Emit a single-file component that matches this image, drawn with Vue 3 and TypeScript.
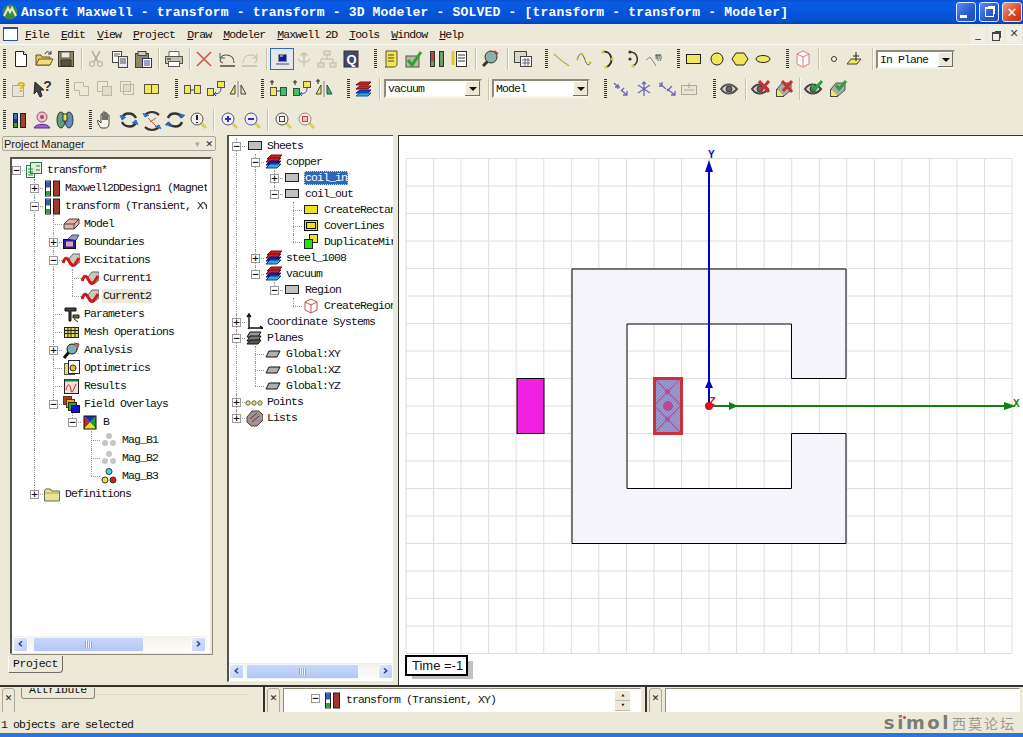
<script setup lang="ts">
type Item = [string, number, string?];

const S = (d: string, fill = 'none', stroke = '#222', sw = 1) =>
  `<path d="${d}" fill="${fill}" stroke="${stroke}" stroke-width="${sw}"/>`;
const R = (x: number, y: number, w: number, h: number, fill: string, stroke = '#222') =>
  `<rect x="${x}" y="${y}" width="${w}" height="${h}" fill="${fill}" stroke="${stroke}"/>`;
const C = (x: number, y: number, r: number, fill: string, stroke = 'none') =>
  `<circle cx="${x}" cy="${y}" r="${r}" fill="${fill}" stroke="${stroke}"/>`;
const T = (x: number, y: number, t: string, fill: string, size = 12, w = 'bold') =>
  `<text x="${x}" y="${y}" fill="${fill}" font-size="${size}" font-weight="${w}" font-family="Liberation Sans, sans-serif" text-anchor="middle">${t}</text>`;

const eye = (c = '#555') =>
  S('M2 11c4-6 11-6 16 0c-5 6-12 6-16 0z', '#d8d4c8', c, 2) + C(10, 11, 3, '#666', '#333');
const zoomGlass = (inner: string, ring = '#555') =>
  S('M14 14l5 5', 'none', '#d8d060', 3) + C(10, 10, 6, '#f2f0e6', ring) + inner;
const layers =
  S('M3 7l4-3h11l-3 3z', '#d02020', '#801010') + S('M3 11l4-3h11l-3 3z', '#c03030', '#601010') +
  S('M3 15l4-3h11l-3 3z', '#2040d0', '#102080') + S('M3 18l4-3h11l-3 3z', '#30a8e0', '#1060a0');
const pairYG = (a: string, b: string) =>
  R(3.5, 7.5, 6, 8, a, '#554') + S('M9 12h4', 'none', '#2040a0') + R(13.5, 7.5, 6, 8, b, '#554');
const arrowSet = (d: string) => S(d, 'none', '#6868b8', 1.3);

const ICONS: Record<string, string> = {
  new: S('M5.5 3.5h8l3 3v12h-11z', '#fff', '#222') + S('M13.5 3.5v3h3', '#fff', '#222'),
  open: S('M3 7h5l1 2h8v8H3z', '#e8c860', '#665520') + S('M3 17l3-6h14l-3 6z', '#f4dc80', '#665520') + S('M12 6c1-3 4-3 6 0m0-3v3h-3', 'none', '#333'),
  save: R(3.5, 3.5, 15, 15, '#8c8a60', '#3c3c28') + R(6, 4, 9, 6, '#ece9d8', '#555') + R(6, 12, 10, 6, '#55553a', '#333'),
  cut: S('M7 3l6 11M15 3l-6 11', 'none', '#aaa69a', 1.4) + C(7, 16, 2.5, 'none', '#aaa69a') + C(15, 16, 2.5, 'none', '#aaa69a'),
  copy: R(3.5, 3.5, 9, 11, '#fff', '#444') + R(9.5, 8.5, 9, 11, '#e8e8f0', '#444') + S('M11 11h6M11 13h6M11 15h6', 'none', '#555') + S('M5 6h6M5 8h4', 'none', '#555'),
  paste: R(3.5, 5.5, 13, 14, '#8c8a60', '#44442c') + R(6, 3.5, 8, 4, '#ccc', '#444') + R(10.5, 10.5, 9, 9, '#fff', '#336') + S('M12 13h6M12 15h6M12 17h6', 'none', '#448'),
  print: S('M6 3.5h10v5H6z', '#fff', '#666') + R(2.5, 8.5, 17, 7, '#c4c0b0', '#555') + R(5.5, 13.5, 11, 5, '#fff', '#555') + S('M4 11h4', 'none', '#222'),
  del: S('M4 4l14 14M18 4L4 18', 'none', '#cc5850', 1.6),
  undo: S('M4 18h15', 'none', '#555', 1.6) + S('M7 15c-5-1-3-8 3-8c5 0 8 3 8 8', 'none', '#555', 1.1) + S('M4 5v5h5', 'none', '#555'),
  redo: S('M3 18h15', 'none', '#c4c0b4', 1.6) + S('M15 15c5-1 3-8-3-8c-5 0-8 3-8 8', 'none', '#c4c0b4', 1.1) + S('M18 5v5h-5', 'none', '#c4c0b4'),
  sel: R(7.5, 6.5, 8, 7, '#1018b0', '#8a8a8a') + S('M5 16h13', 'none', '#999', 2) + S('M9 8h3', 'none', '#fff'),
  ant: S('M11 9v10', 'none', '#bcb8ac') + S('M7 8c2-4 6-4 8 0M5 11c2 4 10 4 12 0', 'none', '#bcb8ac') + C(11, 7, 2, '#c8c4b8'),
  net: R(8, 3, 6, 4, '#e4e0d0', '#bcb8ac') + R(2, 15, 6, 4, '#e4e0d0', '#bcb8ac') + R(14, 15, 6, 4, '#e4e0d0', '#bcb8ac') + S('M11 7v4M5 15v-4h12v4', 'none', '#bcb8ac'),
  q: R(4, 3, 14, 16, '#44486c', '#333') + T(11, 15.5, 'Q', '#fff', 13),
  note: S('M6 3h11v13c0 3-3 3-3 3H5c2 0 1-3 1-3z', '#f2e648', '#554') + S('M8 7h6M8 10h6M8 13h6', 'none', '#443'),
  check: R(3, 8, 13, 11, '#b8b8a8', '#555') + S('M5 12l4 5l9-13', 'none', '#30a030', 3),
  fig: R(4.5, 3.5, 4, 15, '#60a060', '#333') + R(13.5, 3.5, 4, 15, '#60a060', '#333') + R(5.5, 5, 2, 8, '#c04040', '#c04040') + S('M15 5h1v7h-1z', '#e8e050', '#886'),
  list: R(8.5, 3.5, 10, 15, '#fff', '#333') + S('M10 7h7M10 10h7M10 13h7', 'none', '#333') + S('M5 3v14', 'none', '#e0c830', 3),
  glass: S('M4 18l5-5', 'none', '#333', 3) + C(12, 9, 6, '#8ab0a8', '#333') + S('M15 3l4 3', 'none', '#c04040', 2),
  sheet: R(2.5, 3.5, 12, 11, '#dcd8c8', '#444') + R(8.5, 8.5, 11, 10, '#fff', '#444') + S('M10 12h8M10 15h8M13 10v8M16 10v8', 'none', '#666'),
  line: S('M3 6l8 7l7 5', 'none', '#888') + `<path d="M3 6l8 7l7 5" stroke="#d8c820" stroke-width="2" stroke-dasharray="2 6" fill="none"/>`,
  spline: S('M3 12c3-10 6-6 8 0s4 6 6 2', 'none', '#556') + `<path d="M3 12l5-6l5 10l4-2" stroke="#d8c820" stroke-width="2" stroke-dasharray="2 5" fill="none"/>`,
  arc3: `<path d="M6 4c8-2 12 10 4 15" fill="none" stroke="#333" stroke-width="2"/>` + C(6, 4, 1.6, '#d8c820') + C(15, 11, 1.6, '#d8c820') + C(9, 19, 1.6, '#d8c820'),
  arcc: `<path d="M9 4c8 0 10 10 3 14" fill="none" stroke="#333" stroke-width="1.5"/>` + C(9, 4, 1.6, '#333') + C(9, 11, 1.6, '#333') + C(12, 18, 1.6, '#d8c820'),
  ft: S('M2 12l4-3l3 4l3 5', 'none', '#888') + T(14, 11, 'f(t)', '#345', 8, 'normal'),
  rect: R(3.5, 6.5, 14, 9, '#f0e858', '#222'),
  circ: C(11, 11, 6, '#f0e858', '#222'),
  hex: S('M7 5h8l4 6l-4 6H7l-4-6z', '#f0e858', '#222'),
  ell: `<ellipse cx="11" cy="11" rx="7" ry="3.5" fill="#f0e858" stroke="#222"/>`,
  box: S('M11 3l6 3v10l-6 3l-6-3V6z', '#fff', '#e07878') + S('M5 6l6 3l6-3M11 9v10', 'none', '#e07878'),
  pt: C(11, 11, 2.5, '#f6f4e4', '#333'),
  planeT: S('M6 11h10l-4 5H2z', '#f0e858', '#444') + S('M11 4v9M8 8h6', 'none', '#222'),
  helpdoc: R(3.5, 7.5, 11, 11, '#e8e4d8', '#aaa') + T(12, 14, '?', '#d8b810', 15),
  arrowq: S('M4 4l9 8h-4l2 6l-2 1l-3-6l-3 3z', '#444', '#222') + T(16, 13, '?', '#333', 14),
  u1: S('M3.5 4.5h9v4h5v9h-9v-5h-5z', 'none', '#bcb8a8'),
  u2: R(3.5, 3.5, 10, 10, 'none', '#bcb8a8') + R(8.5, 8.5, 9, 9, '#e0dccc', '#bcb8a8'),
  u3: R(3.5, 3.5, 10, 10, 'none', '#bcb8a8') + R(6.5, 6.5, 10, 10, 'none', '#bcb8a8') + R(6.5, 6.5, 7, 7, '#e0dccc', '#bcb8a8'),
  split: R(3.5, 6.5, 7, 9, '#f0e858', '#554') + R(10.5, 6.5, 7, 9, '#f0e858', '#554'),
  mv: pairYG('#f0e858', '#f0e858'),
  rot: R(3.5, 10.5, 6, 7, '#f0e858', '#554') + R(13.5, 3.5, 7, 6, '#f0e858', '#554') + S('M17 10c0 4-2 6-7 6m2-2l-2 2l2 2', 'none', '#2040c0'),
  mir: S('M11 3v16', 'none', '#888') + S('M8 7v9H3z', '#f0e858', '#444') + S('M14 7v9h5z', '#e4e0d0', '#444'),
  mvp: S('M5 2v5M3 4h4', 'none', '#222') + R(3.5, 9.5, 6, 8, '#f0e858', '#554') + S('M9 13h4', 'none', '#2040a0') + R(13.5, 9.5, 6, 8, '#40c060', '#254'),
  rotp: R(3.5, 10.5, 6, 7, '#40c060', '#254') + R(13.5, 3.5, 7, 6, '#f0e858', '#554') + S('M17 10c0 4-2 6-7 6m2-2l-2 2l2 2', 'none', '#2040c0') + S('M5 2v5M3 4h4', 'none', '#222'),
  mirp: S('M11 3v16', 'none', '#888') + S('M8 7v9H3z', '#f0e858', '#444') + S('M14 7v9h5z', '#40b060', '#254') + S('M5 1v5M3 3h4', 'none', '#222'),
  lay: layers,
  a1: arrowSet('M4 5l4 4M8 6v5M5 9h5M11 12l6 5M17 13v4h-4M14 10l-3 3'),
  a2: arrowSet('M11 4v14M5 7l12 8M17 7L5 15M9 6l2-2l2 2') + C(11, 11, 1.5, '#6868b8'),
  a3: arrowSet('M3 5l7 6M6 4v4H3M11 11l8 6M19 13v4h-4M16 8l-5 5'),
  a4: R(3.5, 7.5, 15, 9, '#e8e4d8', '#aaa69a') + S('M6 12h10M11 5v5', 'none', '#aaa69a'),
  eye: eye(),
  eyex: eye('#444') + S('M9 3l10 11M19 3L10 13', 'none', '#c83030', 3),
  boxx: R(3.5, 11.5, 7, 7, '#f0e858', '#444') + S('M4 11l5-6h9v7l-7 6', '#aaa', '#555') + S('M9 3l10 11M19 3L10 13', 'none', '#c83030', 3),
  eyeok: eye('#444') + S('M9 7l3 4l7-8', 'none', '#30a040', 3),
  boxok: R(3.5, 11.5, 7, 7, '#f0e858', '#444') + S('M4 11l5-6h9v7l-7 6', '#aaa', '#555') + S('M9 7l3 4l7-8', 'none', '#30a040', 3),
  tb1: R(5.5, 4.5, 4, 14, '#336', '#222') + R(6, 5, 3, 5, '#4070c0', 'none') + R(6, 14, 3, 4, '#40a040', 'none') + R(12.5, 4.5, 5, 14, '#a04038', '#222'),
  person: C(11, 8, 5, '#e8c8c0', '#a04878') + C(11, 8, 2, '#a04878') + S('M3 19c2-5 14-5 16 0z', '#a060d8', '#603090'),
  bino: `<ellipse cx="7" cy="11" rx="4" ry="8" fill="#60a080" stroke="#333"/><ellipse cx="15" cy="11" rx="4" ry="8" fill="#6090c0" stroke="#333"/>` + R(9, 5, 4, 7, '#f0e050', '#333'),
  hand: S('M6 19c-3-4-4-7-3-8l3 3V5h2v6V3h2v8V4h2v7V6h2v9c0 3-2 4-4 4z', '#f8f6ea', '#444'),
  rot1: `<path d="M4 9c2-6 11-6 14 0" fill="none" stroke="#333" stroke-width="2.4"/><path d="M18 13c-2 6-11 6-14 0" fill="none" stroke="#333" stroke-width="2.4"/><path d="M2 6l2 5l4-3M20 16l-2-5l-4 3" fill="#2a70c8" stroke="#2a70c8"/>`,
  rot2: `<path d="M4 6c4-4 10-4 14 0M4 18c4 4 10 4 14 0" fill="none" stroke="#333" stroke-width="2.2"/><path d="M7 9l8 8M15 9l-6 4" fill="none" stroke="#c06040"/><path d="M2 4l2 4l4-2M20 20l-2-4l-4 2" fill="#2a70c8" stroke="#2a70c8"/>`,
  rot3: `<path d="M4 9c2-6 11-6 14 0" fill="none" stroke="#333" stroke-width="2.4"/><path d="M18 13c-2 6-11 6-14 0" fill="none" stroke="#333" stroke-width="2.4"/><path d="M15 4l3 5l3-3M7 18l-3-5l-3 3" fill="#2a70c8" stroke="#2a70c8"/>`,
  zp: zoomGlass(S('M10 7v6M7 10h6', 'none', '#3030c0', 2), '#5050a0'),
  zm: zoomGlass(S('M7 10h6', 'none', '#3030c0', 2), '#5050a0'),
  zfit: zoomGlass(R(7.5, 7.5, 5, 5, 'none', '#444')),
  zsel: zoomGlass(R(7.5, 7.5, 5, 5, '#f0c0c0', '#c04040'), '#b08080'),
  zinfo: zoomGlass(S('M10 6v5M10 13v1', 'none', '#222', 2)),
};

const row1: Item[] = [['g',3],['i',21,'new'],['i',44,'open'],['i',66,'save'],['s',81],['i',96,'cut'],['i',120,'copy'],['i',143,'paste'],['s',158],['i',174,'print'],['s',189],['i',204,'del'],['i',227,'undo'],['i',250,'redo'],['s',266],['a',282,'sel'],['i',304,'ant'],['i',327,'net'],['i',351,'q'],['g',374],['i',391,'note'],['i',414,'check'],['i',437,'fig'],['i',459,'list'],['s',475],['i',490,'glass'],['s',507],['i',523,'sheet'],['g',545],['i',562,'line'],['i',585,'spline'],['i',608,'arc3'],['i',632,'arcc'],['i',655,'ft'],['g',677],['i',694,'rect'],['i',717,'circ'],['i',740,'hex'],['i',763,'ell'],['g',786],['i',803,'box'],['s',818],['i',834,'pt'],['i',856,'planeT'],['s',872]];
const row2: Item[] = [['g',3],['i',20,'helpdoc'],['i',42,'arrowq'],['g',66],['i',82,'u1'],['i',105,'u2'],['i',128,'u3'],['i',152,'split'],['g',175],['i',192,'mv'],['i',215,'rot'],['i',238,'mir'],['g',261],['i',278,'mvp'],['i',301,'rotp'],['i',324,'mirp'],['g',347],['i',364,'lay'],['s',379]];
const row2b: Item[] = [['g',603],['i',620,'a1'],['i',643,'a2'],['i',666,'a3'],['i',688,'a4'],['g',712],['i',729,'eye'],['s',744],['i',760,'eyex'],['i',783,'boxx'],['s',798],['i',813,'eyeok'],['i',837,'boxok']];
const row3: Item[] = [['g',3],['i',19,'tb1'],['i',42,'person'],['i',65,'bino'],['g',89],['i',106,'hand'],['i',129,'rot1'],['i',152,'rot2'],['i',175,'rot3'],['i',198,'zinfo'],['s',213],['i',229,'zp'],['i',252,'zm'],['s',267],['i',283,'zfit'],['i',306,'zsel']];

const widths: Record<string, number> = { g: 3, s: 1, i: 22, a: 24 };
function place(items: Item[], start = 0) {
  let right = start;
  return items.map(([kind, cx, icon]) => {
    const w = widths[kind];
    const left = kind === 'g' || kind === 's' ? cx : cx - w / 2;
    const gap = left - right;
    right = left + w;
    return { kind, gap, svg: icon ? ICONS[icon] : '' };
  });
}
const toolbar1 = place(row1);
const toolbar2 = place(row2);
const toolbar2b = place(row2b, 589);
const toolbar3 = place(row3);

const TI: Record<string, string> = {
  proj: R(1.5, 4.5, 8, 12, '#fff', '#208040') + R(5.5, 1.5, 11, 11, '#e4f0d8', '#208040') + S('M3 8h5M3 11h5M3 14h5', 'none', '#208040') + S('M12 4v2M14 4v2M12 8v2M14 8v2', 'none', '#208040'),
  design: R(2.5, 2, 5, 15, '#fff', '#222') + R(3, 2.5, 4, 6, '#3060c0', 'none') + R(3, 12, 4, 4.5, '#30a040', 'none') + R(10.5, 2, 6, 15, '#a03830', '#222'),
  model: S('M2 9l5-5h10v5l-5 5H2z', '#e0b0a8', '#444') + S('M2 9h10l5-5M12 9v5', 'none', '#444'),
  bound: R(1.5, 6.5, 12, 9, '#2020a0', '#111') + R(4, 8.5, 7, 5, '#e0a0b8', 'none') + S('M6 6l4-4h7l-3 5', '#9898c0', '#446'),
  excit: S('M6 9l5-6h7v8l-5 4z', '#c8c8bc', '#666') + `<path d="M1 12c2-6 4-6 6-2s4 6 6 3s3-4 4-6" fill="none" stroke="#d01818" stroke-width="3"/>`,
  params: S('M3 3h11v3H9v10H7V6H3z', '#444', '#111') + S('M11 10h6v3h-6zM12 14l4 3', '#806040', '#222'),
  mesh: R(2.5, 4.5, 14, 10, '#e8dc50', '#222') + S('M2 7.5h14M2 10.5h14M6 4v10M9 4v10M13 4v10', 'none', '#222'),
  analysis: S('M2 17l5-6', 'none', '#111', 3) + C(10, 8, 5, '#80b0b0', '#111') + S('M12 2l5 1l-2 6', '#b87070', '#555'),
  optim: R(2.5, 4.5, 10, 11, '#e8dc70', '#554') + R(6.5, 1.5, 11, 13, '#fff', '#224') + C(11, 9, 3, '#e8c020', '#333'),
  results: R(2.5, 2.5, 14, 14, '#f0e0d8', '#222') + S('M3 3.5h13', 'none', '#208040', 2) + S('M4 13c2-8 4-6 5 0s3-2 5-6', 'none', '#c02020'),
  field: R(1.5, 1.5, 8, 8, '#a04020', '#631') + R(4.5, 4.5, 8, 8, '#e0b020', '#631') + R(6.5, 7.5, 8, 8, '#30a040', '#131') + R(9.5, 10.5, 8, 7, '#1010d0', '#113'),
  b: `<path d="M3 3l6 6.5L3 16z" fill="#d02020"/><path d="M15 3L9 9.5l6 6.5z" fill="#20a020"/><path d="M3 3h12L9 9.5z" fill="#1030c0"/><path d="M3 16h12L9 9.5z" fill="#f0e020"/>` + R(3, 3, 12, 13, 'none', '#111'),
  dotg: C(9, 5, 3, '#c4c4c4') + C(5, 12, 3, '#c4c4c4') + C(13, 12, 3, '#c4c4c4'),
  dotc: C(9, 4.5, 3, '#40d8e0', '#333') + C(5, 13, 3, '#f0e040', '#333') + C(13, 13, 3, '#d02020', '#333'),
  folder: S('M1.5 6l1-2h5l1 2h8v10h-15z', '#e8e490', '#666') + S('M1.5 8h15', 'none', '#a8a050'),
  sheet: R(3.5, 4.5, 13, 8, '#c0c0c0', '#222'),
  sheet2: R(2.5, 4.5, 13, 8, '#c0c0c0', '#222'),
  layers: S('M3 6l4-4h11l-4 4z', '#d02020', '#701010') + S('M2 9l4-4h11l-4 4z', '#d02020', '#701010') + S('M2 12l4-4h11l-4 4z', '#1818b0', '#101070') + S('M2 15l4-4h11l-4 4z', '#30a8e8', '#104070'),
  yrect: R(2.5, 4.5, 13, 8, '#f0e020', '#222'),
  cover: R(2.5, 3.5, 13, 10, '#f0e020', '#111') + R(4.5, 5.5, 9, 6, 'none', '#111'),
  dup: R(7.5, 1.5, 8, 8, '#f0e020', '#222') + R(2.5, 6.5, 8, 9, '#20e020', '#222'),
  region: S('M9 2l6 3v8l-6 3l-6-3V5z', '#fff', '#c05050') + S('M3 5l6 3l6-3M9 8v8', 'none', '#c05050'),
  axes: S('M4 2v13h13M4 15l-2 3M2 4l2-3l2 3M15 13l3 2l-3 2', 'none', '#111', 1.4),
  planes: S('M5 3h11l-3 5H2z', '#999', '#111') + S('M5 7h11l-3 5H2z', '#777', '#111') + S('M5 11h11l-3 4H2z', '#555', '#111'),
  plane: S('M5 6h11l-3 6H2z', '#b0b0b0', '#111'),
  points: C(3, 10, 2.2, '#e8e070', '#665') + C(9, 10, 2.2, '#e8e070', '#665') + C(15, 10, 2.2, '#e8e070', '#665'),
  lists: S('M2 8l5-6h7l4 4v5l-6 6H6l-4-4z', '#a89090', '#444') + S('M5 10l7-6M7 13l7-6', 'none', '#444'),
};

type Node = { d: number; e?: string; i: string; t: string; cls?: string };
const leftRows: Node[] = [
  { d: 0, e: '-', i: 'proj', t: 'transform*' },
  { d: 1, e: '+', i: 'design', t: 'Maxwell2DDesign1 (Magnetostatic, XY)' },
  { d: 1, e: '-', i: 'design', t: 'transform (Transient, XY)' },
  { d: 2, i: 'model', t: 'Model' },
  { d: 2, e: '+', i: 'bound', t: 'Boundaries' },
  { d: 2, e: '-', i: 'excit', t: 'Excitations' },
  { d: 3, i: 'excit', t: 'Current1' },
  { d: 3, i: 'excit', t: 'Current2', cls: 'hover' },
  { d: 2, i: 'params', t: 'Parameters' },
  { d: 2, i: 'mesh', t: 'Mesh Operations' },
  { d: 2, e: '+', i: 'analysis', t: 'Analysis' },
  { d: 2, i: 'optim', t: 'Optimetrics' },
  { d: 2, i: 'results', t: 'Results' },
  { d: 2, e: '-', i: 'field', t: 'Field Overlays' },
  { d: 3, e: '-', i: 'b', t: 'B' },
  { d: 4, i: 'dotg', t: 'Mag_B1' },
  { d: 4, i: 'dotg', t: 'Mag_B2' },
  { d: 4, i: 'dotc', t: 'Mag_B3' },
  { d: 1, e: '+', i: 'folder', t: 'Definitions' },
];
const midRows: Node[] = [
  { d: 0, e: '-', i: 'sheet', t: 'Sheets' },
  { d: 1, e: '-', i: 'layers', t: 'copper' },
  { d: 2, e: '+', i: 'sheet2', t: 'coil_in', cls: 'selected' },
  { d: 2, e: '-', i: 'sheet2', t: 'coil_out' },
  { d: 3, i: 'yrect', t: 'CreateRectangle' },
  { d: 3, i: 'cover', t: 'CoverLines' },
  { d: 3, i: 'dup', t: 'DuplicateMirror' },
  { d: 1, e: '+', i: 'layers', t: 'steel_1008' },
  { d: 1, e: '-', i: 'layers', t: 'vacuum' },
  { d: 2, e: '-', i: 'sheet2', t: 'Region' },
  { d: 3, i: 'region', t: 'CreateRegion' },
  { d: 0, e: '+', i: 'axes', t: 'Coordinate Systems' },
  { d: 0, e: '-', i: 'planes', t: 'Planes' },
  { d: 1, i: 'plane', t: 'Global:XY' },
  { d: 1, i: 'plane', t: 'Global:XZ' },
  { d: 1, i: 'plane', t: 'Global:YZ' },
  { d: 0, e: '+', i: 'points', t: 'Points' },
  { d: 0, e: '+', i: 'lists', t: 'Lists' },
];

function buildTree(rows: Node[], x0: number, firstLevel: number) {
  return rows.map((r, i) => {
    const guides: { x: number; half: boolean }[] = [];
    for (let k = firstLevel; k <= r.d; k++) {
      let later = false;
      for (let j = i + 1; j < rows.length; j++) {
        if (rows[j].d < k) break;
        if (rows[j].d === k) { later = true; break; }
      }
      if (later) guides.push({ x: x0 + 19 * k, half: false });
      else if (k === r.d) guides.push({ x: x0 + 19 * k, half: true });
    }
    return { ...r, guides, pad: x0 + 19 * r.d - 4, svg: TI[r.i] };
  });
}
const leftTree = buildTree(leftRows, 3, 1);
const midTree = buildTree(midRows, 7, 0);
const dockIcon = TI.design;

const gridX = Array.from({ length: 23 }, (_, k) => 406 + 27.55 * k);
const gridY = Array.from({ length: 19 }, (_, k) => 158.5 + 27.5 * k);
const menus = [['F', 'ile'], ['E', 'dit'], ['V', 'iew'], ['P', 'roject'], ['D', 'raw'], ['M', 'odeler'], ['M', 'axwell 2D'], ['T', 'ools'], ['W', 'indow'], ['H', 'elp']];
</script>

<template>
  <div class="app">
    <header class="title">
      <svg class="logo" width="16" height="16" viewBox="0 0 16 16">
        <circle cx="8" cy="8" r="7.5" fill="#3a8a50" />
        <path d="M2 12L6 4l2 4l2-4l4 8" fill="none" stroke="#f2e8b0" stroke-width="2" />
      </svg>
      <span class="title-text">Ansoft Maxwell - transform - transform - 3D Modeler - SOLVED - [transform - transform - Modeler]</span>
      <div class="win-btns">
        <span class="wb"><i class="wb-min"></i></span>
        <span class="wb"><i class="wb-max"></i></span>
        <span class="wb wb-close">✕</span>
      </div>
    </header>

    <nav class="menu">
      <span class="mdi-icon"></span>
      <div class="menu-items">
        <span v-for="m in menus" :key="m[1]" class="menu-item"><u>{{ m[0] }}</u>{{ m[1] }}</span>
      </div>
      <div class="mdi-btns">
        <span class="mdi-b">_</span><span class="mdi-b mdi-r"></span><span class="mdi-b mdi-x">✕</span>
      </div>
    </nav>

    <div class="tb tb1">
      <template v-for="(it, n) in toolbar1" :key="n">
        <span v-if="it.kind === 'g'" class="grip" :style="{ marginLeft: it.gap + 'px' }"></span>
        <span v-else-if="it.kind === 's'" class="sep" :style="{ marginLeft: it.gap + 'px' }"></span>
        <svg v-else class="ic" :class="{ active: it.kind === 'a' }" :width="it.kind === 'a' ? 24 : 22" height="22" viewBox="0 0 22 22" :style="{ marginLeft: it.gap + 'px' }" v-html="it.svg"></svg>
      </template>
      <div class="combo c-plane"><span>In Plane</span><b></b></div>
    </div>

    <div class="tb tb2">
      <template v-for="(it, n) in toolbar2" :key="n">
        <span v-if="it.kind === 'g'" class="grip" :style="{ marginLeft: it.gap + 'px' }"></span>
        <span v-else-if="it.kind === 's'" class="sep" :style="{ marginLeft: it.gap + 'px' }"></span>
        <svg v-else class="ic" width="22" height="22" viewBox="0 0 22 22" :style="{ marginLeft: it.gap + 'px' }" v-html="it.svg"></svg>
      </template>
      <div class="combo c-mat"><span>vacuum</span><b></b></div>
      <span class="sep s-mid"></span>
      <div class="combo c-model"><span>Model</span><b></b></div>
      <template v-for="(it, n) in toolbar2b" :key="'b' + n">
        <span v-if="it.kind === 'g'" class="grip" :style="{ marginLeft: it.gap + 'px' }"></span>
        <span v-else-if="it.kind === 's'" class="sep" :style="{ marginLeft: it.gap + 'px' }"></span>
        <svg v-else class="ic" width="22" height="22" viewBox="0 0 22 22" :style="{ marginLeft: it.gap + 'px' }" v-html="it.svg"></svg>
      </template>
    </div>

    <div class="tb tb3">
      <template v-for="(it, n) in toolbar3" :key="n">
        <span v-if="it.kind === 'g'" class="grip" :style="{ marginLeft: it.gap + 'px' }"></span>
        <span v-else-if="it.kind === 's'" class="sep" :style="{ marginLeft: it.gap + 'px' }"></span>
        <svg v-else class="ic" width="22" height="22" viewBox="0 0 22 22" :style="{ marginLeft: it.gap + 'px' }" v-html="it.svg"></svg>
      </template>
    </div>

    <main class="main">
      <section class="pm">
        <div class="pm-head">
          <span>Project Manager</span>
          <span class="pm-pin">▾</span>
          <span class="pm-x">✕</span>
        </div>
        <div class="frame pm-frame">
          <div class="tree tree-l">
            <div v-for="(r, n) in leftTree" :key="n" class="row" :style="{ paddingLeft: r.pad + 'px' }">
              <i v-for="(g, k) in r.guides" :key="k" class="guide" :class="{ half: g.half }" :style="{ left: g.x + 'px' }"></i>
              <span class="slot"><span v-if="r.e" class="exp">{{ r.e === '+' ? '+' : '−' }}</span></span>
              <svg class="ti" width="18" height="18" viewBox="0 0 18 18" v-html="r.svg"></svg>
              <span class="label" :class="r.cls">{{ r.t }}</span>
            </div>
          </div>
          <div class="hscroll">
            <span class="sb-btn">‹</span><span class="sb-thumb t-left"><i></i></span><span class="sb-btn sb-end">›</span>
          </div>
        </div>
        <div class="pm-tab">Project</div>
      </section>

      <section class="frame mid">
        <div class="tree tree-m">
          <div v-for="(r, n) in midTree" :key="n" class="row" :style="{ paddingLeft: r.pad + 'px' }">
            <i v-for="(g, k) in r.guides" :key="k" class="guide" :class="{ half: g.half }" :style="{ left: g.x + 'px' }"></i>
            <span class="slot"><span v-if="r.e" class="exp">{{ r.e === '+' ? '+' : '−' }}</span></span>
            <svg class="ti" width="18" height="18" viewBox="0 0 18 18" v-html="r.svg"></svg>
            <span class="label" :class="r.cls">{{ r.t }}</span>
          </div>
        </div>
        <div class="hscroll">
          <span class="sb-btn">‹</span><span class="sb-thumb t-mid"><i></i></span><span class="sb-btn sb-end">›</span>
        </div>
      </section>

      <section class="view">
        <svg width="625" height="550" viewBox="398 135 625 550">
          <defs>
            <pattern id="fine" x="0" y="0" width="3" height="3" patternUnits="userSpaceOnUse">
              <rect width="3" height="3" fill="#9c9cd4" />
              <path d="M0 3L3 0" stroke="#7c7cb8" stroke-width="0.8" />
            </pattern>
            <pattern id="hatch" x="654" y="378" width="27" height="27.5" patternUnits="userSpaceOnUse">
              <path d="M0 0L27 27.500M27 0L0 27.500" stroke="#b0508c" stroke-width="1.2" fill="none" />
              <circle cx="13.500" cy="13.750" r="2.500" fill="#b84a90" />
            </pattern>
          </defs>
          <g stroke="#dedede">
            <line v-for="x in gridX" :key="x" :x1="x" :x2="x" y1="158" y2="653" />
            <line v-for="y in gridY" :key="y" :y1="y" :y2="y" x1="406" x2="1012" />
          </g>
          <path d="M572 269H846V378.500H791.500V324H627V488.500H791.500V433.500H846V543.500H572Z" fill="#f5f4fa" stroke="#000" />
          <rect x="517" y="378.500" width="27" height="55" fill="#f020e0" stroke="#000" />
          <rect x="654.500" y="378.500" width="27" height="55" fill="url(#fine)" />
          <rect x="654.500" y="378.500" width="27" height="55" fill="url(#hatch)" />
          <circle cx="668" cy="406" r="5" fill="#b84a90" />
          <rect x="654.500" y="378.500" width="27" height="55" fill="none" stroke="#cc3038" stroke-width="3" />
          <line x1="709" y1="406" x2="709" y2="165" stroke="#0000c8" stroke-width="2" />
          <path d="M709 160l-4 12h8zM709 379l-4 9h8z" fill="#0000c8" />
          <line x1="709" y1="406" x2="1010" y2="406" stroke="#108010" stroke-width="2" />
          <path d="M1016 406l-12-4v8zM738 406l-9-4v8z" fill="#108010" />
          <circle cx="709" cy="406" r="4" fill="#d81020" />
          <text x="708" y="158" class="ax" fill="#0000c8">Y</text>
          <text x="1013" y="407" class="ax" fill="#108010">X</text>
          <text x="709" y="405" class="ax az" fill="#d81020">Z</text>
          <rect x="412" y="661" width="61" height="18" fill="#c0c0c0" />
          <rect x="406" y="656" width="61" height="19" fill="#fff" stroke="#000" stroke-width="2" />
          <text x="412" y="670" class="time">Time =-1</text>
        </svg>
      </section>
    </main>

    <footer class="docks">
      <div class="dock d1">
        <span class="dx">✕</span>
        <span class="attr-tab">Attribute</span>
        <span class="attr-line"></span>
      </div>
      <div class="dock d2">
        <span class="dx">✕</span>
        <div class="dock-box">
          <span class="exp dock-exp">−</span>
          <svg class="dock-ic" width="18" height="18" viewBox="0 0 18 18" v-html="dockIcon"></svg>
          <span class="dock-text">transform (Transient, XY)</span>
          <span class="spin"><i>▴</i><i>▾</i></span>
        </div>
      </div>
      <div class="dock d3">
        <span class="dx">✕</span>
        <div class="dock-box d3box"></div>
      </div>
    </footer>

    <div class="status">
      <span>1 objects are selected</span>
      <span class="mark"><b>simol</b><em>西莫论坛</em></span>
    </div>
    <div class="strip"></div>
  </div>
</template>

<style scoped>
.app {
  width: 1023px;
  height: 737px;
  display: flex;
  flex-direction: column;
  overflow: hidden;
  background: #ece9d8;
  font-family: "Liberation Mono", monospace;
  font-size: 11.5px;
  letter-spacing: -0.9px;
  color: #111;
}
.title {
  height: 24px;
  flex: none;
  display: flex;
  align-items: center;
  padding-left: 3px;
  background: linear-gradient(#0a4fd0, #0a5ce6 12%, #0654dc 50%, #0450d0 85%, #0540b4);
}
.logo { flex: none; margin-left: -1px; }
.title-text {
  margin-left: 3px;
  font-size: 13px;
  font-weight: 700;
  letter-spacing: 0.19px;
  color: #fff;
  white-space: nowrap;
}
.win-btns { margin-left: auto; display: flex; gap: 3px; padding-right: 1px; }
.wb {
  width: 20px;
  height: 20px;
  box-sizing: border-box;
  border: 1px solid #dfe8fb;
  border-radius: 3px;
  background: linear-gradient(135deg, #5a8cf0, #2858d0 60%, #1c48c0);
  display: flex;
  align-items: center;
  justify-content: center;
  color: #fff;
  letter-spacing: 0;
}
.wb-close { background: linear-gradient(135deg, #ec9a80, #d84a28 60%, #c03010); font-weight: 700; font-size: 13px; font-family: "DejaVu Sans", sans-serif; }
.wb-min { width: 7px; height: 3px; background: #fff; margin: 9px 6px 0 0; }
.wb-max { width: 7px; height: 7px; border: 1px solid #fff; border-top-width: 2px; box-shadow: 2px -2px 0 -1px #fff; }
.menu {
  height: 21px;
  flex: none;
  display: flex;
  align-items: center;
  border-bottom: 1px solid #fbfaf5;
  box-sizing: border-box;
}
.mdi-icon {
  width: 15px;
  height: 14px;
  margin-left: 3px;
  box-sizing: border-box;
  background: #fff;
  border: 1px solid #2a50a0;
  border-top-width: 2px;
  flex: none;
}
.menu-items { display: flex; gap: 12px; margin-left: 7px; }
.menu-item { white-space: nowrap; }
.mdi-btns { margin-left: auto; display: flex; gap: 2px; padding-right: 1px; }
.mdi-b {
  width: 16px;
  height: 17px;
  background: #f1efe4;
  text-align: center;
  line-height: 15px;
  font-weight: 700;
  color: #444;
  font-family: "DejaVu Sans", sans-serif;
  font-size: 11px;
  letter-spacing: 0;
}
.mdi-r { position: relative; }
.mdi-r::after { content: ""; position: absolute; left: 4px; top: 6px; width: 6px; height: 6px; border: 1px solid #444; border-top-width: 2px; box-shadow: 2px -2px 0 -1px #444; }
.tb { flex: none; display: flex; align-items: center; background: #ece9d8; }
.tb1 { height: 28px; }
.tb2 { height: 31px; }
.tb3 { height: 31px; }
.grip {
  flex: none;
  width: 3px;
  height: 20px;
  background: repeating-linear-gradient(#333 0 1px, transparent 1px 2px);
}
.sep { flex: none; width: 1px; height: 22px; background: #c4c1b0; box-shadow: 1px 0 0 #fbfaf5; }
.s-mid { margin-left: 6px; }
.ic { flex: none; overflow: visible; }
.active { background: #e4e6f0; outline: 1px solid #316ac5; outline-offset: -1px; }
.combo {
  flex: none;
  height: 19px;
  box-sizing: border-box;
  background: #fff;
  border: 2px solid;
  border-color: #8e8b7c #e8e6d8 #f6f5ee #8e8b7c;
  display: flex;
  align-items: center;
  justify-content: space-between;
  padding-left: 2px;
}
.combo b {
  width: 15px;
  height: 15px;
  background: #ece9d8;
  box-shadow: inset -1px -1px 0 #716f64, inset 1px 1px 0 #fff;
  position: relative;
}
.combo b::after {
  content: "";
  position: absolute;
  left: 4px;
  top: 6px;
  border: 4px solid transparent;
  border-top: 4px solid #111;
  border-bottom-width: 0;
}
.c-plane { width: 79px; margin-left: 3px; }
.c-mat { width: 98px; margin-left: 4px; }
.c-model { width: 98px; margin-left: 3px; }
.main { height: 550px; flex: none; display: flex; align-items: flex-start; }
.pm { width: 218px; height: 550px; flex: none; display: flex; flex-direction: column; }
.pm-head {
  margin: 1px 2px 0;
  height: 15px;
  flex: none;
  box-sizing: border-box;
  border: 1px solid #aca899;
  border-radius: 2px;
  display: flex;
  align-items: center;
  padding: 0 2px 0 1px;
  font-family: "Liberation Sans", sans-serif;
  font-size: 11px;
  letter-spacing: 0;
  color: #222;
}
.pm-pin { margin-left: auto; color: #aaa; font-size: 9px; margin-right: 5px; }
.pm-x { font-family: "DejaVu Sans", sans-serif; font-size: 9px; font-weight: 700; }
.frame {
  box-sizing: border-box;
  background: #fff;
  border: 2px solid;
  border-color: #55534a #ece9d8 #ece9d8 #55534a;
  display: flex;
  flex-direction: column;
  overflow: hidden;
}
.pm-frame {
  margin: 6px 0 0 10px;
  width: 202px;
  height: 497px;
  flex: none;
  padding-right: 3px;
  border-bottom-width: 1px;
  box-shadow: 1px 1px 0 #8e8b7c;
}
.tree { flex: 1; min-height: 0; overflow: hidden; position: relative; }
.tree-l { padding-top: 2px; }
.tree-m { padding-top: 2px; }
.row {
  position: relative;
  display: flex;
  align-items: center;
  white-space: nowrap;
}
.tree-l .row { height: 18px; }
.tree-m .row { height: 16px; }
.guide {
  position: absolute;
  top: 0;
  bottom: 0;
  border-left: 1px dotted #999;
}
.guide.half { bottom: 50%; }
.slot {
  flex: none;
  width: 13px;
  height: 9px;
  position: relative;
}
.slot::after {
  content: "";
  position: absolute;
  left: 4px;
  right: 0;
  top: 4px;
  border-top: 1px dotted #999;
}
.exp {
  position: absolute;
  z-index: 1;
  left: 0;
  top: 0;
  box-sizing: border-box;
  width: 9px;
  height: 9px;
  background: #fff;
  border: 1px solid #9a9a9a;
  display: flex;
  align-items: center;
  justify-content: center;
  font: 700 9px/1 "DejaVu Sans", sans-serif;
  letter-spacing: 0;
  color: #111;
}
.ti { flex: none; position: relative; background: #fff; }
.label { margin-left: 3px; padding: 0 1px; line-height: 14px; }
.hover { background: #ece9d8; }
.selected { background: #3165b5; color: #fff; outline: 1px dotted #c8d4ea; outline-offset: -1px; }
.hscroll {
  flex: none;
  height: 17px;
  display: flex;
  align-items: center;
  gap: 2px;
  padding: 0 1px;
  background: linear-gradient(#f3f1e8, #fdfdfb);
}
.sb-btn {
  width: 15px;
  height: 15px;
  flex: none;
  border-radius: 2px;
  background: linear-gradient(135deg, #e2ebfd, #b9cdf6);
  border: 1px solid #fff;
  box-sizing: border-box;
  color: #27408b;
  font: 700 14px/11px "DejaVu Sans", sans-serif;
  letter-spacing: 0;
  text-align: center;
}
.sb-end { margin-left: auto; }
.sb-thumb {
  height: 15px;
  border-radius: 2px;
  background: linear-gradient(#c8d6fa, #b3c8f5);
  border: 1px solid #f2f5fd;
  box-sizing: border-box;
  flex: none;
  display: flex;
  align-items: center;
  justify-content: center;
}
.sb-thumb i { width: 7px; height: 7px; background: repeating-linear-gradient(90deg, #8fa8e0 0 1px, #eef3fd 1px 2px); }
.t-left { width: 111px; margin-left: 3px; }
.t-mid { width: 113px; }
.pm-tab {
  margin: 2px 0 0 8px;
  width: 55px;
  height: 17px;
  flex: none;
  box-sizing: border-box;
  border: 1px solid #6e6c60;
  border-top: none;
  border-left-color: #fff;
  border-radius: 0 0 4px 0;
  text-align: center;
  line-height: 16px;
  letter-spacing: -0.5px;
}
.mid {
  width: 166px;
  height: 547px;
  margin-left: 9px;
  flex: none;
  border-right-width: 0;
  border-top-width: 1px;
  border-bottom-width: 1px;
}
.mid .hscroll { height: 17px; padding: 0; margin-bottom: 1px; }
.view {
  margin-left: 5px;
  width: 625px;
  height: 550px;
  flex: none;
  box-sizing: border-box;
  background: #fff;
  box-shadow: inset 1px 1px 0 #333;
  overflow: hidden;
}
.view svg { display: block; }
.ax { font: 700 10px "Liberation Sans", sans-serif; letter-spacing: 0; }
.az { font-style: italic; }
.time { font: 13px "Liberation Sans", sans-serif; letter-spacing: 0; fill: #111; }
.docks {
  height: 27px;
  flex: none;
  display: flex;
  border-top: 2px solid #33332c;
  box-sizing: border-box;
}
.dock { position: relative; display: flex; align-items: flex-start; padding: 1px 0 0 2px; box-sizing: border-box; overflow: hidden; }
.d1 { width: 263px; }
.d2 { width: 382px; border-left: 2px solid #33332c; }
.d3 { flex: 1; border-left: 2px solid #33332c; }
.dx {
  width: 13px;
  height: 30px;
  flex: none;
  border: 1px solid #aca899;
  border-radius: 3px;
  box-sizing: border-box;
  text-align: center;
  font: 700 9px/18px "DejaVu Sans", sans-serif;
  letter-spacing: 0;
}
.attr-tab {
  height: 10px;
  margin-left: 6px;
  padding: 0 7px;
  line-height: 4px;
  border: 1px solid #8e8b7c;
  border-top: none;
  border-radius: 0 0 3px 3px;
  overflow: hidden;
  letter-spacing: -0.5px;
}
.attr-line { flex: 1; margin: 6px 14px 0 0; border-top: 1px solid #dcd9c8; }
.dock-box {
  flex: 1;
  height: 30px;
  margin-left: 3px;
  background: #fff;
  border: 1px solid;
  border-color: #8e8b7c transparent transparent #8e8b7c;
  display: flex;
  align-items: flex-start;
  position: relative;
  padding-top: 2px;
  margin-right: 4px;
}
.d3box { margin-right: 3px; }
.dock-exp { left: 27px; top: 5px; }
.dock-ic { margin-left: 39px; }
.dock-text { margin-left: 5px; line-height: 18px; }
.spin { margin-left: auto; margin-right: 10px; display: flex; flex-direction: column; width: 15px; font-size: 7px; line-height: 9px; text-align: center; }
.spin i { font-style: normal; border-bottom: 1px solid #bbb; background: #ece9d8; }
.status {
  height: 21px;
  flex: none;
  box-sizing: border-box;
  padding: 3px 0 0 1px;
  display: flex;
  align-items: center;
  position: relative;
}
.mark { margin-left: auto; margin-right: 7px; margin-top: -3px; display: flex; align-items: center; letter-spacing: 0; position: relative; }
.mark::before { content: ""; position: absolute; left: 19px; top: 4px; width: 3px; height: 3px; border-radius: 50%; background: #d04040; }
.mark b { font: 700 18px "DejaVu Sans", sans-serif; letter-spacing: 2.6px; color: #7c7c76; }
.mark em { font: normal 14px "Noto Sans CJK SC", sans-serif; margin-left: 1px; letter-spacing: 2px; color: #999; }
.strip { height: 4px; flex: none; background: #2f74d8; }
</style>

<style>
html, body { background: #ece9d8; overflow: hidden; }
</style>
